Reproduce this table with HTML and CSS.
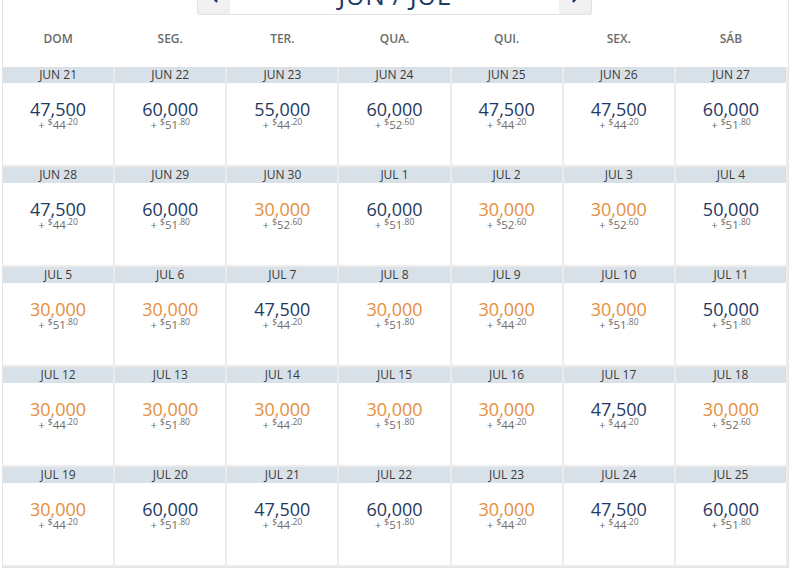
FILE: index.html
```html
<!DOCTYPE html>
<html>
<head>
<meta charset="utf-8">
<link rel="stylesheet" href="styles.css">
</head>
<body>
<div class="panel">
  <div class="nav">
    <div class="nav-btn"><svg width="9" height="13" viewBox="0 0 10 14"><path d="M8 1 L2 7 L8 13" fill="none" stroke="#1d3a62" stroke-width="2.5"/></svg></div>
    <div class="nav-title">JUN / JUL</div>
    <div class="nav-btn"><svg width="9" height="13" viewBox="0 0 10 14"><path d="M2 1 L8 7 L2 13" fill="none" stroke="#1d3a62" stroke-width="2.5"/></svg></div>
  </div>
  <div class="weekdays">
    <div>DOM</div><div>SEG.</div><div>TER.</div><div>QUA.</div><div>QUI.</div><div>SEX.</div><div>SÁB</div>
  </div>
  <div class="grid">
    <div class="day"><div class="date">JUN 21</div><div class="miles">47,500</div><div class="fee">+ <sup>$</sup>44<sup>.20</sup></div></div>
    <div class="day"><div class="date">JUN 22</div><div class="miles">60,000</div><div class="fee">+ <sup>$</sup>51<sup>.80</sup></div></div>
    <div class="day"><div class="date">JUN 23</div><div class="miles">55,000</div><div class="fee">+ <sup>$</sup>44<sup>.20</sup></div></div>
    <div class="day"><div class="date">JUN 24</div><div class="miles">60,000</div><div class="fee">+ <sup>$</sup>52<sup>.60</sup></div></div>
    <div class="day"><div class="date">JUN 25</div><div class="miles">47,500</div><div class="fee">+ <sup>$</sup>44<sup>.20</sup></div></div>
    <div class="day"><div class="date">JUN 26</div><div class="miles">47,500</div><div class="fee">+ <sup>$</sup>44<sup>.20</sup></div></div>
    <div class="day"><div class="date">JUN 27</div><div class="miles">60,000</div><div class="fee">+ <sup>$</sup>51<sup>.80</sup></div></div>

    <div class="day"><div class="date">JUN 28</div><div class="miles">47,500</div><div class="fee">+ <sup>$</sup>44<sup>.20</sup></div></div>
    <div class="day"><div class="date">JUN 29</div><div class="miles">60,000</div><div class="fee">+ <sup>$</sup>51<sup>.80</sup></div></div>
    <div class="day"><div class="date">JUN 30</div><div class="miles low">30,000</div><div class="fee">+ <sup>$</sup>52<sup>.60</sup></div></div>
    <div class="day"><div class="date">JUL 1</div><div class="miles">60,000</div><div class="fee">+ <sup>$</sup>51<sup>.80</sup></div></div>
    <div class="day"><div class="date">JUL 2</div><div class="miles low">30,000</div><div class="fee">+ <sup>$</sup>52<sup>.60</sup></div></div>
    <div class="day"><div class="date">JUL 3</div><div class="miles low">30,000</div><div class="fee">+ <sup>$</sup>52<sup>.60</sup></div></div>
    <div class="day"><div class="date">JUL 4</div><div class="miles">50,000</div><div class="fee">+ <sup>$</sup>51<sup>.80</sup></div></div>

    <div class="day"><div class="date">JUL 5</div><div class="miles low">30,000</div><div class="fee">+ <sup>$</sup>51<sup>.80</sup></div></div>
    <div class="day"><div class="date">JUL 6</div><div class="miles low">30,000</div><div class="fee">+ <sup>$</sup>51<sup>.80</sup></div></div>
    <div class="day"><div class="date">JUL 7</div><div class="miles">47,500</div><div class="fee">+ <sup>$</sup>44<sup>.20</sup></div></div>
    <div class="day"><div class="date">JUL 8</div><div class="miles low">30,000</div><div class="fee">+ <sup>$</sup>51<sup>.80</sup></div></div>
    <div class="day"><div class="date">JUL 9</div><div class="miles low">30,000</div><div class="fee">+ <sup>$</sup>44<sup>.20</sup></div></div>
    <div class="day"><div class="date">JUL 10</div><div class="miles low">30,000</div><div class="fee">+ <sup>$</sup>51<sup>.80</sup></div></div>
    <div class="day"><div class="date">JUL 11</div><div class="miles">50,000</div><div class="fee">+ <sup>$</sup>51<sup>.80</sup></div></div>

    <div class="day"><div class="date">JUL 12</div><div class="miles low">30,000</div><div class="fee">+ <sup>$</sup>44<sup>.20</sup></div></div>
    <div class="day"><div class="date">JUL 13</div><div class="miles low">30,000</div><div class="fee">+ <sup>$</sup>51<sup>.80</sup></div></div>
    <div class="day"><div class="date">JUL 14</div><div class="miles low">30,000</div><div class="fee">+ <sup>$</sup>44<sup>.20</sup></div></div>
    <div class="day"><div class="date">JUL 15</div><div class="miles low">30,000</div><div class="fee">+ <sup>$</sup>51<sup>.80</sup></div></div>
    <div class="day"><div class="date">JUL 16</div><div class="miles low">30,000</div><div class="fee">+ <sup>$</sup>44<sup>.20</sup></div></div>
    <div class="day"><div class="date">JUL 17</div><div class="miles">47,500</div><div class="fee">+ <sup>$</sup>44<sup>.20</sup></div></div>
    <div class="day"><div class="date">JUL 18</div><div class="miles low">30,000</div><div class="fee">+ <sup>$</sup>52<sup>.60</sup></div></div>

    <div class="day"><div class="date">JUL 19</div><div class="miles low">30,000</div><div class="fee">+ <sup>$</sup>44<sup>.20</sup></div></div>
    <div class="day"><div class="date">JUL 20</div><div class="miles">60,000</div><div class="fee">+ <sup>$</sup>51<sup>.80</sup></div></div>
    <div class="day"><div class="date">JUL 21</div><div class="miles">47,500</div><div class="fee">+ <sup>$</sup>44<sup>.20</sup></div></div>
    <div class="day"><div class="date">JUL 22</div><div class="miles">60,000</div><div class="fee">+ <sup>$</sup>51<sup>.80</sup></div></div>
    <div class="day"><div class="date">JUL 23</div><div class="miles low">30,000</div><div class="fee">+ <sup>$</sup>44<sup>.20</sup></div></div>
    <div class="day"><div class="date">JUL 24</div><div class="miles">47,500</div><div class="fee">+ <sup>$</sup>44<sup>.20</sup></div></div>
    <div class="day"><div class="date">JUL 25</div><div class="miles">60,000</div><div class="fee">+ <sup>$</sup>51<sup>.80</sup></div></div>
  </div>
</div>
</body>
</html>
```
FILE: styles.css
```css
html, body {
  margin: 0;
  padding: 0;
  background: #fff;
  font-family: "Open Sans", "DejaVu Sans", sans-serif;
  overflow: hidden;
}

.panel {
  margin-left: 2px;
  width: 785px;
  border-left: 1px solid #e4e4e4;
  border-right: 1px solid #e4e4e4;
  border-bottom: 1px solid #e4e4e4;
  background: #fff;
}

.nav {
  margin-left: 194px;
  margin-top: -22px;
  width: 395px;
  height: 37px;
  display: flex;
  border: 1px solid #e3e3e3;
  border-top: none;
  border-radius: 0 0 3px 3px;
  background: #fff;
  box-sizing: border-box;
}

.nav-btn {
  width: 32px;
  flex: none;
  background: linear-gradient(#f7f7f7, #efefef);
  display: flex;
  align-items: center;
  justify-content: center;
  box-sizing: border-box;
}

.nav-title {
  flex: 1;
  text-align: center;
  font-size: 26px;
  line-height: 35px;
  color: #1d3a62;
  letter-spacing: 0.5px;
}

.weekdays {
  display: grid;
  grid-template-columns: repeat(7, 1fr);
  column-gap: 2px;
  padding-right: 2px;
  height: 52px;
  align-items: center;
}

.weekdays div {
  text-align: center;
  font-size: 12px;
  line-height: 16px;
  font-weight: 600;
  color: #6b6b6b;
  padding-bottom: 4px;
}

.grid {
  display: grid;
  grid-template-columns: repeat(7, 1fr);
  gap: 2px;
  padding: 0 2px 2px 0;
  background: #ececec;
}

.day {
  background: #fff;
  height: 98px;
  text-align: center;
}

.date {
  height: 16px;
  line-height: 16px;
  background: #d9e1e8;
  font-size: 12px;
  color: #3a3a3a;
}

.miles {
  margin-top: 16px;
  font-size: 18px;
  line-height: 20px;
  color: #1f3a60;
}

.miles.low {
  color: #e58f3e;
}

.fee {
  font-size: 11.5px;
  line-height: 12px;
  color: #6e6e6e;
}

.fee sup {
  font-size: 8.5px;
  vertical-align: 4px;
  line-height: 0;
}
```
